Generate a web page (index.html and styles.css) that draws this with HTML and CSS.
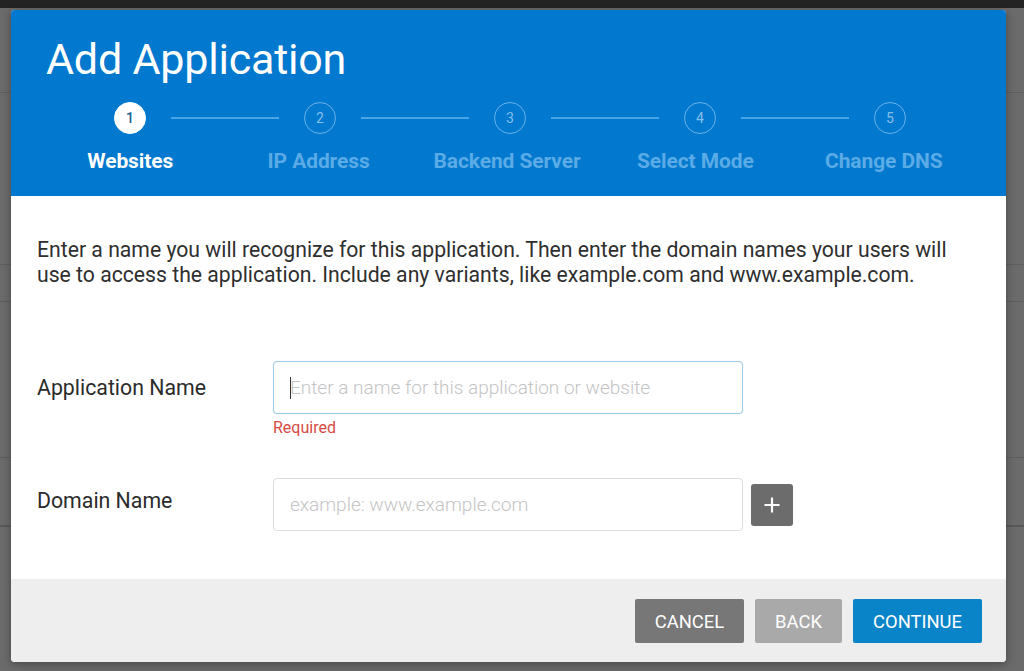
FILE: index.html
```html
<!DOCTYPE html>
<html lang="en">
<head>
<meta charset="utf-8">
<title>Add Application</title>
<link rel="stylesheet" href="styles.css">
</head>
<body>
<div class="backdrop">
  <div class="topband"></div>
  <div class="bg-lines">
    <div class="bg-line l1"></div>
    <div class="bg-line l2"></div>
    <div class="bg-line l3"></div>
    <div class="bg-line l4"></div>
    <div class="bg-line l5"></div>
  </div>
  <div class="stage">
    <div class="modal">
      <header class="modal-header">
        <h1 class="title">Add Application</h1>
        <div class="steps-track">
          <span class="step-circle active">1</span>
          <span class="step-line"></span>
          <span class="step-circle">2</span>
          <span class="step-line"></span>
          <span class="step-circle">3</span>
          <span class="step-line"></span>
          <span class="step-circle">4</span>
          <span class="step-line"></span>
          <span class="step-circle">5</span>
        </div>
        <div class="steps-labels">
          <span class="step-label active">Websites</span>
          <span class="step-label">IP Address</span>
          <span class="step-label">Backend Server</span>
          <span class="step-label">Select Mode</span>
          <span class="step-label">Change DNS</span>
        </div>
      </header>
      <section class="modal-body">
        <p class="intro">Enter a name you will recognize for this application. Then enter the domain names your users will use to access the application. Include any variants, like example.com and www.example.com.</p>
        <div class="form-row first">
          <label class="field-label" for="appname">Application Name</label>
          <div class="field">
            <div class="input-wrap">
              <input id="appname" class="text-input focused" type="text" placeholder="Enter a name for this application or website">
              <span class="caret"></span>
            </div>
          </div>
        </div>
        <div class="error">Required</div>
        <div class="form-row second">
          <label class="field-label" for="domain">Domain Name</label>
          <div class="field with-btn">
            <input id="domain" class="text-input" type="text" placeholder="example: www.example.com">
            <button class="add-btn" type="button" aria-label="Add domain">
              <svg width="18" height="18" viewBox="0 0 18 18"><path d="M9 1.5v15M1.5 9h15" stroke="#fff" stroke-width="2.2" fill="none"/></svg>
            </button>
          </div>
        </div>
      </section>
      <footer class="modal-footer">
        <button class="btn btn-cancel" type="button">CANCEL</button>
        <button class="btn btn-back" type="button">BACK</button>
        <button class="btn btn-continue" type="button">CONTINUE</button>
      </footer>
    </div>
  </div>
</div>
</body>
</html>
```

FILE: styles.css
```css
* { box-sizing: border-box; }

html, body {
  margin: 0;
  padding: 0;
  width: 1024px;
  height: 671px;
  overflow: hidden;
  font-family: Roboto, "Liberation Sans", Arial, sans-serif;
}

.backdrop {
  position: relative;
  width: 1024px;
  height: 671px;
  background: #6b6b6b;
}

.topband {
  position: absolute;
  left: 0;
  top: 0;
  width: 100%;
  height: 8px;
  background: #232323;
}

.bg-lines .bg-line {
  position: absolute;
  left: 0;
  width: 100%;
  height: 1px;
  background: #5e5e5e;
}
.bg-line.l1 { top: 92px; }
.bg-line.l2 { top: 264px; }
.bg-line.l3 { top: 301px; }
.bg-line.l4 { top: 457px; }
.bg-line.l5 { top: 525px; height: 2px; background: #585858; }

.stage {
  position: relative;
  padding: 10px 18px 9px 11px;
}

.modal {
  width: 995px;
  height: 652px;
  display: flex;
  flex-direction: column;
  border-radius: 4px;
  overflow: hidden;
  background: #fff;
  box-shadow: 0 2px 10px rgba(0, 0, 0, 0.35);
}

/* Header */
.modal-header {
  background: #0278ce;
  height: 186px;
  padding: 25px 0 0 0;
  flex: none;
}

.title {
  margin: 0 0 20px 35px;
  font-size: 43px;
  line-height: 48px;
  font-weight: 400;
  color: #fff;
  letter-spacing: -0.2px;
}

.steps-track {
  display: flex;
  align-items: center;
  margin-left: 103px;
  height: 30px;
}

.step-circle {
  flex: none;
  width: 32px;
  height: 32px;
  border-radius: 50%;
  border: 1.5px solid rgba(140, 196, 240, 0.75);
  color: rgba(150, 200, 240, 0.9);
  font-size: 14px;
  display: flex;
  align-items: center;
  justify-content: center;
}

.step-circle.active {
  background: #fff;
  border-color: #fff;
  color: #1a5f94;
  font-weight: 500;
}

.step-line {
  flex: none;
  width: 108px;
  height: 2px;
  margin: 0 25px;
  background: #4ba4e4;
}

.steps-labels {
  display: grid;
  grid-template-columns: repeat(5, 188.4px);
  margin: 16px 0 0 25px;
}

.step-label {
  text-align: center;
  font-size: 21px;
  line-height: 24px;
  font-weight: 700;
  color: #5aabe6;
  letter-spacing: -0.1px;
  white-space: nowrap;
}

.step-label.active {
  color: #fff;
}

/* Body */
.modal-body {
  flex: 1;
  padding: 41px 26px 0 26px;
}

.intro {
  margin: 0;
  width: 935px;
  font-size: 21.2px;
  line-height: 25px;
  color: #2f2f2f;
}

.form-row {
  display: grid;
  grid-template-columns: 236px 470px;
  align-items: center;
}

.form-row.first { margin-top: 74px; }
.form-row.second { margin-top: 41px; }

.field-label {
  font-size: 21.3px;
  color: #2b2b2b;
}

.form-row.second .field-label {
  margin-bottom: 9px;
}

.field.with-btn {
  display: flex;
  align-items: center;
  width: 520px;
}

.input-wrap {
  position: relative;
}

.text-input {
  display: block;
  width: 470px;
  height: 53px;
  margin: 0;
  padding: 0 16px;
  border: 1px solid #dcdcdc;
  border-radius: 4px;
  background: #fff;
  font-family: Roboto, "Liberation Sans", Arial, sans-serif;
  font-size: 19px;
  font-weight: 300;
  color: #333;
  outline: none;
}

.text-input::placeholder {
  color: #c4c4c4;
  opacity: 1;
}

.text-input.focused {
  border-color: #9ccbe6;
  box-shadow: 0 0 1px rgba(80, 160, 220, 0.3);
}

.caret {
  position: absolute;
  left: 17px;
  top: 16px;
  width: 1px;
  height: 22px;
  background: #333;
}

.add-btn {
  flex: none;
  width: 42px;
  height: 42px;
  margin-left: 8px;
  padding: 0;
  border: none;
  border-radius: 3px;
  background: #6c6c6c;
  display: flex;
  align-items: center;
  justify-content: center;
}

.error {
  margin: 5px 0 0 236px;
  font-size: 16px;
  line-height: 18px;
  color: #d64b43;
}

/* Footer */
.modal-footer {
  flex: none;
  height: 83px;
  background: #eeeeee;
  display: flex;
  justify-content: flex-end;
  align-items: flex-start;
  padding: 20px 24px 0 0;
  gap: 11px;
}

.btn {
  height: 44px;
  border: none;
  border-radius: 2px;
  color: #fff;
  font-family: Roboto, "Liberation Sans", Arial, sans-serif;
  font-size: 18.4px;
  padding: 0;
}

.btn-cancel { width: 109px; background: #777777; }
.btn-back { width: 87px; background: #a9a9a9; }
.btn-continue { width: 129px; background: #0984c8; }
```
